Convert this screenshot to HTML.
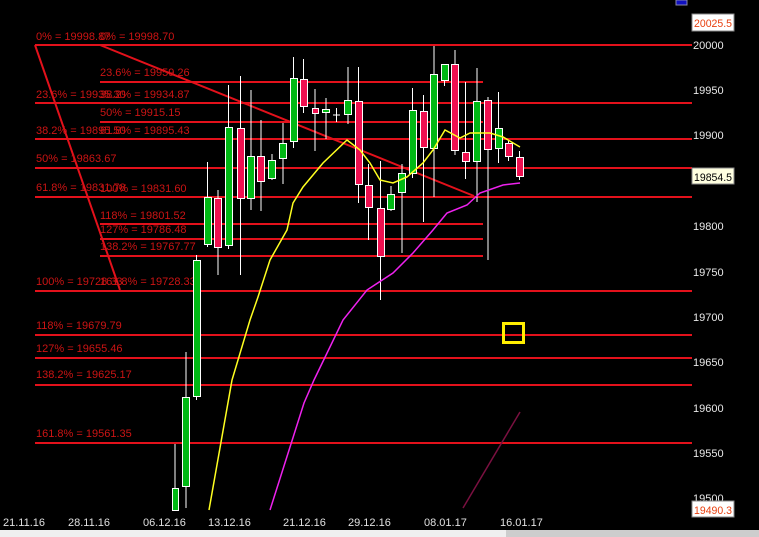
<!DOCTYPE html>
<html><head><meta charset="utf-8"><style>
html,body{margin:0;padding:0;background:#000;width:759px;height:537px;overflow:hidden}
svg{display:block}
text{font-family:"Liberation Sans",Arial,sans-serif}
</style></head><body>
<svg width="759" height="537" viewBox="0 0 759 537" xmlns="http://www.w3.org/2000/svg">
<rect width="759" height="537" fill="#000"/>
<g stroke="#e3111b" stroke-width="2">
<line x1="35" y1="45" x2="692" y2="45"/>
<line x1="35" y1="103" x2="692" y2="103"/>
<line x1="35" y1="139" x2="692" y2="139"/>
<line x1="35" y1="168" x2="692" y2="168"/>
<line x1="35" y1="197" x2="692" y2="197"/>
<line x1="35" y1="291" x2="692" y2="291"/>
<line x1="35" y1="335" x2="692" y2="335"/>
<line x1="35" y1="358" x2="692" y2="358"/>
<line x1="35" y1="385" x2="692" y2="385"/>
<line x1="35" y1="443" x2="692" y2="443"/>
<line x1="100" y1="82" x2="483" y2="82"/>
<line x1="100" y1="122" x2="483" y2="122"/>
<line x1="100" y1="224" x2="483" y2="224"/>
<line x1="100" y1="239" x2="483" y2="239"/>
<line x1="100" y1="256" x2="483" y2="256"/>
<line x1="35" y1="45" x2="120" y2="290"/>
<line x1="100" y1="45" x2="474" y2="196"/>
</g>
<g fill="#cc1414" font-size="11">
<text x="36" y="40">0% = 19998.87</text>
<text x="100" y="40">0% = 19998.70</text>
<text x="100" y="76">23.6% = 19959.26</text>
<text x="36" y="98">23.6% = 19935.30</text>
<text x="100" y="98">38.2% = 19934.87</text>
<text x="100" y="116">50% = 19915.15</text>
<text x="36" y="134">38.2% = 19895.50</text>
<text x="100" y="134">61.8% = 19895.43</text>
<text x="36" y="162">50% = 19863.67</text>
<text x="36" y="191">61.8% = 19831.78</text>
<text x="100" y="192">100% = 19831.60</text>
<text x="100" y="219">118% = 19801.52</text>
<text x="100" y="233">127% = 19786.48</text>
<text x="100" y="250">138.2% = 19767.77</text>
<text x="36" y="285">100% = 19728.33</text>
<text x="100" y="285">161.8% = 19728.33</text>
<text x="36" y="329">118% = 19679.79</text>
<text x="36" y="352">127% = 19655.46</text>
<text x="36" y="378">138.2% = 19625.17</text>
<text x="36" y="437">161.8% = 19561.35</text>
</g>
<g stroke="#fff" stroke-width="1">
<line x1="175" y1="444" x2="175" y2="510"/>
<line x1="186" y1="352" x2="186" y2="508"/>
<line x1="196.5" y1="255" x2="196.5" y2="400"/>
<line x1="207.5" y1="162" x2="207.5" y2="247"/>
<line x1="218" y1="190" x2="218" y2="275"/>
<line x1="228.5" y1="85" x2="228.5" y2="249"/>
<line x1="240.5" y1="76" x2="240.5" y2="275"/>
<line x1="251" y1="90" x2="251" y2="210"/>
<line x1="261" y1="120" x2="261" y2="211"/>
<line x1="272" y1="154" x2="272" y2="180"/>
<line x1="283" y1="123" x2="283" y2="184"/>
<line x1="293.5" y1="57" x2="293.5" y2="148"/>
<line x1="303.5" y1="59" x2="303.5" y2="113"/>
<line x1="315" y1="89" x2="315" y2="151"/>
<line x1="326" y1="98" x2="326" y2="139"/>
<line x1="336.5" y1="108" x2="336.5" y2="122"/>
<line x1="333" y1="115" x2="340" y2="115"/>
<line x1="348" y1="67" x2="348" y2="124"/>
<line x1="358.5" y1="67" x2="358.5" y2="203"/>
<line x1="368.5" y1="164" x2="368.5" y2="240"/>
<line x1="380.5" y1="161" x2="380.5" y2="300"/>
<line x1="391" y1="186" x2="391" y2="211"/>
<line x1="402" y1="164" x2="402" y2="253"/>
<line x1="412.5" y1="88" x2="412.5" y2="178"/>
<line x1="423.5" y1="95" x2="423.5" y2="222"/>
<line x1="434" y1="46" x2="434" y2="197"/>
<line x1="444.5" y1="64" x2="444.5" y2="86"/>
<line x1="455" y1="50" x2="455" y2="155"/>
<line x1="465.5" y1="82" x2="465.5" y2="179"/>
<line x1="477" y1="68" x2="477" y2="202"/>
<line x1="488" y1="97" x2="488" y2="260"/>
<line x1="498.5" y1="92" x2="498.5" y2="163"/>
<line x1="508.5" y1="140" x2="508.5" y2="161"/>
<line x1="519.5" y1="151" x2="519.5" y2="180"/>
</g>
<g stroke="#fff" stroke-width="1">
<rect x="172.5" y="488.5" width="6" height="22" fill="#00b814"/>
<rect x="182.5" y="397.5" width="7" height="89" fill="#00b814"/>
<rect x="193.5" y="260.5" width="7" height="136" fill="#00b814"/>
<rect x="204.5" y="197.5" width="7" height="47" fill="#00b814"/>
<rect x="214.5" y="198.5" width="7" height="49" fill="#ee1050"/>
<rect x="225.5" y="127.5" width="7" height="118" fill="#00b814"/>
<rect x="237.5" y="128.5" width="7" height="70" fill="#ee1050"/>
<rect x="247.5" y="156.5" width="7" height="42" fill="#00b814"/>
<rect x="257.5" y="156.5" width="7" height="25" fill="#ee1050"/>
<rect x="268.5" y="160.5" width="7" height="18" fill="#00b814"/>
<rect x="279.5" y="143.5" width="7" height="15" fill="#00b814"/>
<rect x="290.5" y="78.5" width="7" height="63" fill="#00b814"/>
<rect x="300.5" y="79.5" width="7" height="27" fill="#ee1050"/>
<rect x="312.5" y="108.5" width="6" height="5" fill="#ee1050"/>
<rect x="322.5" y="109.5" width="7" height="3" fill="#00b814"/>
<rect x="344.5" y="100.5" width="7" height="14" fill="#00b814"/>
<rect x="355.5" y="101.5" width="7" height="83" fill="#ee1050"/>
<rect x="365.5" y="185.5" width="7" height="22" fill="#ee1050"/>
<rect x="377.5" y="208.5" width="7" height="48" fill="#ee1050"/>
<rect x="387.5" y="194.5" width="7" height="15" fill="#00b814"/>
<rect x="398.5" y="173.5" width="7" height="19" fill="#00b814"/>
<rect x="409.5" y="110.5" width="7" height="63" fill="#00b814"/>
<rect x="420.5" y="111.5" width="7" height="36" fill="#ee1050"/>
<rect x="430.5" y="74.5" width="7" height="74" fill="#00b814"/>
<rect x="441.5" y="64.5" width="7" height="16" fill="#00b814"/>
<rect x="451.5" y="64.5" width="7" height="86" fill="#ee1050"/>
<rect x="462.5" y="152.5" width="7" height="9" fill="#ee1050"/>
<rect x="473.5" y="101.5" width="7" height="60" fill="#00b814"/>
<rect x="484.5" y="100.5" width="7" height="49" fill="#ee1050"/>
<rect x="495.5" y="128.5" width="7" height="20" fill="#00b814"/>
<rect x="505.5" y="143.5" width="7" height="13" fill="#ee1050"/>
<rect x="516.5" y="157.5" width="7" height="19" fill="#ee1050"/>
</g>
<polyline fill="none" stroke="#ffff20" stroke-width="1.5" points="209,510 232,380 250,320 258,297 270,260 287,230 293,203 303,187 323,163 347,140 360,150 370,163 380,180 393,183 407,177 423,163 433,150 445,130 460,138 470,133 490,133 503,137 520,147"/>
<polyline fill="none" stroke="#ee22ee" stroke-width="1.5" points="270,510 304,403 314,380 343,320 367,290 393,273 413,253 433,230 447,213 467,205 480,193 503,185 520,183"/>
<line x1="463" y1="508" x2="520" y2="412" stroke="#7a1040" stroke-width="1.5"/>
<rect x="503.5" y="323.5" width="20" height="19" fill="none" stroke="#ffee00" stroke-width="3"/>
<g fill="#e8e8e8" font-size="11">
<text x="693" y="49">20000</text>
<text x="693" y="94">19950</text>
<text x="693" y="139">19900</text>
<text x="693" y="230">19800</text>
<text x="693" y="276">19750</text>
<text x="693" y="321">19700</text>
<text x="693" y="366">19650</text>
<text x="693" y="412">19600</text>
<text x="693" y="457">19550</text>
<text x="693" y="502">19500</text>
</g>
<rect x="692" y="14" width="42" height="17" fill="#fff" stroke="#888"/>
<text x="694" y="27" font-size="11" fill="#e84010" textLength="38" lengthAdjust="spacingAndGlyphs">20025.5</text>
<rect x="692" y="168" width="42" height="16" fill="#ffffe0" stroke="#888"/>
<text x="694" y="181" font-size="11" fill="#000" textLength="38" lengthAdjust="spacingAndGlyphs">19854.5</text>
<rect x="692" y="501" width="42" height="16" fill="#fff" stroke="#888"/>
<text x="694" y="514" font-size="11" fill="#e84010" textLength="38" lengthAdjust="spacingAndGlyphs">19490.3</text>
<rect x="676" y="0" width="11" height="5" fill="#1010c0" stroke="#88a"/>
<g fill="#e0e0e0" font-size="11">
<text x="3" y="526">21.11.16</text>
<text x="68" y="526">28.11.16</text>
<text x="143" y="526">06.12.16</text>
<text x="208" y="526">13.12.16</text>
<text x="283" y="526">21.12.16</text>
<text x="348" y="526">29.12.16</text>
<text x="424" y="526">08.01.17</text>
<text x="500" y="526">16.01.17</text>
</g>
<rect x="0" y="530" width="759" height="7" fill="#efefef"/>
<rect x="506" y="530" width="253" height="7" fill="#cdcdcd"/>
</svg>
</body></html>
